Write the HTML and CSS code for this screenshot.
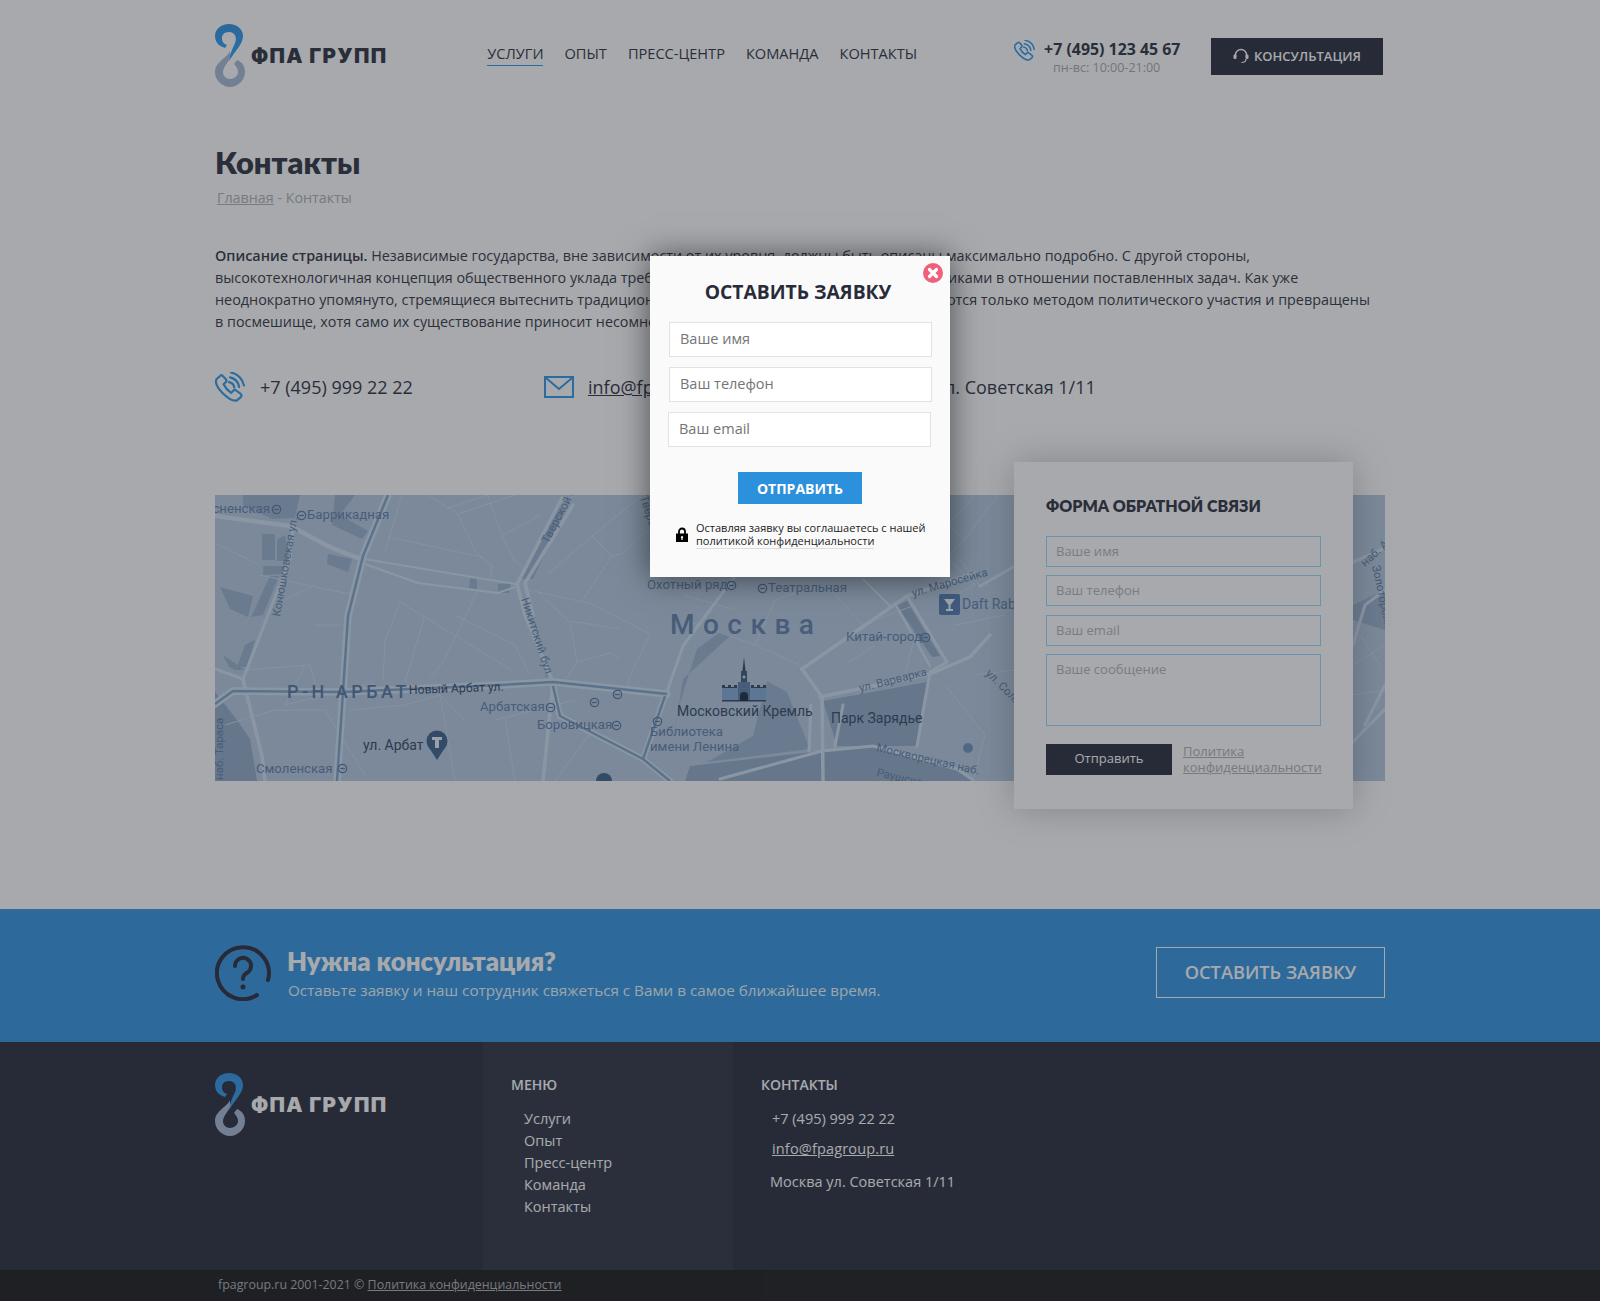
FILE: index.html
```html
<!DOCTYPE html>
<html lang="ru">
<head>
<meta charset="UTF-8">
<meta name="viewport" content="width=device-width, initial-scale=1.0">
<title>Контакты</title>
<link rel="stylesheet" href="styles.css">
</head>
<body>
<svg class="defs" width="0" height="0">
    <defs>
        <linearGradient id="logoTop" x1="0" y1="0" x2="0" y2="1">
            <stop offset="0" stop-color="#2a8fe2"/>
            <stop offset="1" stop-color="#2a9cf2"/>
        </linearGradient>
        <symbol id="logoMark" viewBox="0 0 30 63">
            <path fill="url(#logoTop)" d="M10 24C3 22 0 17 0 12C0 5 6 0 14 0C22 0 28 5 28 12C28 20 20 27 14 37C15 29 18 24 20 19C22 15 21 8 14 8C9 8 7 11 7 14C7 18 9 20 12 21Z"/>
            <path fill="#a5b8d4" d="M15 27C13 33 0 38 0 48C0 56 7 63 15 63C23 63 30 56 30 48C30 42 27 38 22 36L19 40C21 42 23 45 23 48C23 52 19 55 15 55C11 55 8 52 8 48C8 43 13 39 15 34Z"/>
        </symbol>
        <symbol id="phoneIcon" viewBox="1 1.500 28 28">
            <path fill="none" stroke="#2a94e6" stroke-width="2" stroke-linejoin="round" d="M6 5L2.500 8C1 11 3 16 8 21C13 26 18 29 21.500 28L25 25C26 24 26 23 25 22L21 19C20 18 19 18 18 19L16 21C13 19 11 17 9 13L11 11C12 10 12 9 11 8L8 5C7.500 4.500 6.500 4.500 6 5Z"/>
            <path fill="none" stroke="#2a94e6" stroke-width="2" stroke-linecap="round" d="M14 11a6 6 0 0 1 5 5M15 6.500a11 11 0 0 1 8.500 9M16 2a15 15 0 0 1 12 12"/>
        </symbol>
        <symbol id="metro" viewBox="0 0 10 10">
            <circle cx="5" cy="5" r="3.800" fill="none" stroke="#54789f" stroke-width="1.200"/>
            <path d="M2.800 5H7.200" stroke="#54789f" stroke-width="1.200"/>
        </symbol>
    </defs>
</svg>

<div class="page">
    <header class="wrap header">
        <a class="logo" href="#">
            <svg class="logo-mark" width="30" height="63"><use href="#logoMark"/></svg>
            <span class="logo-text">ФПА ГРУПП</span>
        </a>
        <nav class="nav">
            <a class="nav-link active" href="#">Услуги</a>
            <a class="nav-link" href="#">Опыт</a>
            <a class="nav-link" href="#">Пресс-центр</a>
            <a class="nav-link" href="#">Команда</a>
            <a class="nav-link" href="#">Контакты</a>
        </nav>
        <div class="head-phone">
            <svg class="head-phone-icon" width="21" height="21"><use href="#phoneIcon"/></svg>
            <div class="head-phone-text">
                <div class="head-phone-num">+7 (495) 123 45 67</div>
                <div class="head-phone-time">пн-вс: 10:00-21:00</div>
            </div>
        </div>
        <a class="consult-btn" href="#">
            <svg width="16" height="16" viewBox="0 0 16 16">
                <path fill="none" stroke="#fff" stroke-width="1.400" d="M2.500 9V7a5.500 5.500 0 0 1 11 0v2"/>
                <rect x="0.500" y="6.500" width="3" height="4.500" rx="1.200" fill="#fff"/>
                <rect x="12.500" y="6.500" width="3" height="4.500" rx="1.200" fill="#fff"/>
                <path fill="none" stroke="#fff" stroke-width="1.200" d="M13 11c0 2.500-2 3.500-4.500 3.500"/>
            </svg>
            Консультация
        </a>
    </header>

    <main class="wrap">
        <h1 class="page-title">Контакты</h1>
        <div class="crumbs"><a href="#">Главная</a> - Контакты</div>
        <p class="intro"><b>Описание страницы.</b> Независимые государства, вне зависимости от их уровня, должны быть описаны максимально подробно. С другой стороны,<br>высокотехнологичная концепция общественного уклада требует анализа прочных перспектив с участниками в отношении поставленных задач. Как уже<br>неоднократно упомянуто, стремящиеся вытеснить традиционное производство, технологии объединяются только методом политического участия и превращены<br>в посмешище, хотя само их существование приносит несомненную пользу обществу.</p>

        <div class="contacts">
            <div class="contact">
                <svg class="contact-icon" width="30" height="30"><use href="#phoneIcon"/></svg>
                <span>+7 (495) 999 22 22</span>
            </div>
            <div class="contact">
                <svg class="contact-icon contact-icon-mail" width="30" height="22" viewBox="0 0 30 22">
                    <rect x="1" y="1" width="28" height="20" fill="none" stroke="#2a94e6" stroke-width="2"/>
                    <path d="M2 2L15 13L28 2" fill="none" stroke="#2a94e6" stroke-width="2"/>
                </svg>
                <a href="#">info@fpagroup.ru</a>
            </div>
            <div class="contact">
                <span>Москва ул. Советская 1/11</span>
            </div>
        </div>

        <section class="map-block">
            <svg class="map" width="1170" height="286" viewBox="0 0 1170 286">
                <rect width="1170" height="286" fill="#b4c8de"/>

                <g fill="#98b0cc">
                    <polygon points="28,0 85,0 80,23 57,24 28,10"/>
                    <polygon points="113,59 137,64 133,77 112,69"/>
                    <polygon points="120,0 140,0 125,20 153,36 147,44 117,30"/>
                    <polygon points="47,39 60,39 60,65 47,65"/>
                    <polygon points="62,45 70,40 75,66 62,66"/>
                    <polygon points="48,71 70,71 68,79 48,80"/>
                    <polygon points="55,81 64,81 48,120 36,122"/>
                    <polygon points="5,92 38,101 33,122 15,114"/>
                    <polygon points="8,160 30,175 20,175 14,172"/>
                    <polygon points="30,150 40,145 32,172 22,172"/>
                    <polygon points="255,83 262,84 262,94 254,93"/>
                    <polygon points="283,89 296,88 294,98 283,98"/>
                    <polygon points="333,32 345,12 350,15 318,84 307,84"/>
                    <polygon points="455,267 468,184 515,141 505,137 482,154 463,214"/>
                    <polygon points="552,186 572,197 595,254 492,267 538,241"/>
                    <polygon points="1138,110 1170,95 1170,135 1138,125"/>
                </g>
                <g fill="#8fa9c6">
                    <polygon points="0,197 22,225 35,244 42,286 0,286"/>
                    <polygon points="608,206 712,187 702,251 622,251"/>
                    <polygon points="682,111 692,106 725,161 717,162"/>
                    <polygon points="475,271 607,256 658,251 742,274 758,286 470,286"/>
                </g>

                <g fill="none" stroke="#c4d7ea" stroke-width="1">
                    <path d="M173 42L267 62L277 71L275 84"/>
                    <path d="M187 0L170 57"/>
                    <path d="M213 0L243 19L260 56L267 64"/>
                    <path d="M273 0L287 41L300 66L307 71"/>
                    <path d="M233 13L273 0M243 19L300 0M287 41L325 20"/>
                    <path d="M333 79L377 41L427 0"/>
                    <path d="M377 41L397 61L408 58L435 33"/>
                    <path d="M397 61L367 106"/>
                    <path d="M310 94L377 109L435 139"/>
                    <path d="M262 97L228 167L215 184"/>
                    <path d="M185 107L170 147L168 187"/>
                    <path d="M185 107L295 174"/>
                    <path d="M322 96L355 127L362 167L350 186"/>
                    <path d="M355 126L405 134"/>
                    <path d="M435 139L415 181L412 194"/>
                    <path d="M362 167L395 158L405 163"/>
                    <path d="M0 48L45 70M45 80L100 92L140 100"/>
                    <path d="M30 175L95 170L100 188M70 210L160 188M90 170L70 210"/>
                    <path d="M10 230L60 215L110 215L150 280M135 215L190 210L225 200L250 225"/>
                    <path d="M225 200L240 286M280 225L360 205M290 224L300 286M340 286L385 225"/>
                    <path d="M240 120L300 150L315 180M210 120L190 187"/>
                    <path d="M60 110L100 90M100 130L125 130"/>
                    <path d="M468 100L520 115M470 125L540 150L585 170"/>
                    <path d="M540 150L560 105L600 92M620 100L648 130L700 110"/>
                    <path d="M640 200L690 180L700 140M630 170L660 150"/>
                    <path d="M730 190L770 240L758 285M760 180L800 175M740 130L790 120M730 60L760 90L730 105"/>
                    <path d="M760 0L733 30L750 44L735 60M783 0L750 44M765 91L745 65"/>
                    <path d="M1138 170L1170 150M1138 200L1170 195M1145 140L1165 170"/>
                </g>

                <g fill="none" stroke="#cddff0" stroke-linecap="round" stroke-linejoin="round">
                    <path stroke-width="4.500" d="M0 21L75 31L117 53L143 63"/>
                    <path stroke-width="2" d="M143 63L300 89M147 68L203 88L283 98L300 92"/>
                    <path stroke-width="3.500" d="M347 3L302 89L310 120L338 187L328 286"/>
                    <path stroke-width="3.500" d="M358 10L310 88L318 120"/>
                    <path stroke-width="3" d="M78 32L75 64L28 184L0 174"/>
                    <path stroke-width="3.500" d="M28 184L47 261L50 286"/>
                    <path stroke-width="3" d="M452 197L468 151L503 104L518 84L530 70"/>
                    <path stroke-width="3.500" d="M587 174L692 101L760 78"/>
                    <path stroke-width="3.500" d="M587 174L607 202L608 285"/>
                    <path stroke-width="3.500" d="M605 202L715 179L755 162L775 140"/>
                    <path stroke-width="3" d="M692 101L732 167L715 177L702 251"/>
                    <path stroke-width="2.500" d="M682 112L715 171"/>
                    <path stroke-width="2" d="M648 84L675 111"/>
                    <path stroke-width="3" d="M505 284L607 256L658 251L742 274L758 285"/>
                    <path stroke-width="3" d="M765 91L800 71"/>
                    <path stroke-width="3" d="M620 251L628 210M594 256L596 210"/>
                    <path stroke-width="3" d="M1138 67L1168 54M1138 247L1170 214M1138 150L1150 110L1170 95M1150 230L1170 190"/>
                    <path stroke-width="7.500" d="M173 0L148 61L133 121L128 197L122 286"/>
                    <path stroke-width="7.500" d="M0 209L18 196L128 197L285 190L338 187L452 199"/>
                    <path stroke-width="6" d="M338 191L345 221L428 264L450 201M428 264L455 286"/>
                </g>
                <g fill="none" stroke="#7ca0c8" stroke-width="2.500" stroke-linejoin="round">
                    <path d="M173 0L148 61L133 121L128 197L122 286"/>
                    <path d="M0 209L18 196L128 197L285 190L338 187L452 199"/>
                    <path d="M338 191L345 221L428 264L450 201M428 264L455 286"/>
                </g>

                <text class="map-label" x="55" y="18" text-anchor="end">Краснопресненская</text>
                <text class="map-label" x="92" y="24">Баррикадная</text>
                <text class="map-label map-small" transform="translate(65 122) rotate(-80)">Конюшковская ул.</text>
                <text class="map-label map-small" transform="translate(333 49) rotate(-62)">Тверской б-р</text>
                <text class="map-label map-small" transform="translate(425 2) rotate(72)">Тверская</text>
                <text class="map-label map-small" transform="translate(306 104) rotate(72)">Никитский бул.</text>
                <text class="map-label map-rayon" x="72" y="203">Р-Н АРБАТ</text>
                <text class="map-label map-small map-dark map-street" transform="translate(194 199) rotate(-2)">Новый Арбат ул.</text>
                <text class="map-label" x="265" y="216">Арбатская</text>
                <text class="map-label" x="322" y="234">Боровицкая</text>
                <text class="map-label map-big map-dark" x="148" y="255">ул. Арбат</text>
                <text class="map-label" x="41" y="278">Смоленская</text>
                <text class="map-label map-small" transform="translate(8 285) rotate(-90)">наб. Тараса</text>
                <text class="map-label" x="432" y="94">Охотный ряд</text>
                <text class="map-label" x="553" y="97">Театральная</text>
                <text class="map-label map-city" x="455" y="139">Москва</text>
                <text class="map-label map-big" x="747" y="114">Daft Rabbits</text>
                <text class="map-label" x="631" y="146">Китай-город</text>
                <text class="map-label map-big map-dark" x="462" y="221">Московский Кремль</text>
                <text class="map-label map-big map-dark" x="616" y="228">Парк Зарядье</text>
                <text class="map-label" x="435" y="241">Библиотека</text>
                <text class="map-label" x="435" y="256">имени Ленина</text>
                <text class="map-label map-small" transform="translate(645 197) rotate(-14)">ул. Варварка</text>
                <text class="map-label map-small" transform="translate(661 256) rotate(13)">Москворецкая наб.</text>
                <text class="map-label map-small" transform="translate(661 281) rotate(13)">Раушская</text>
                <text class="map-label map-small" transform="translate(698 102) rotate(-16)">ул. Маросейка</text>
                <text class="map-label map-small" transform="translate(770 179) rotate(45)">ул. Солянка</text>
                <text class="map-label map-small" transform="translate(1150 72) rotate(-42)">наб. А</text>
                <text class="map-label map-small" transform="translate(1157 71) rotate(78)">Золоторожская</text>

                <use href="#metro" x="56" y="9" width="11" height="11"/>
                <use href="#metro" x="81" y="15" width="11" height="11"/>
                <use href="#metro" x="330" y="207" width="11" height="11"/>
                <use href="#metro" x="396" y="225" width="11" height="11"/>
                <use href="#metro" x="374" y="202" width="11" height="11"/>
                <use href="#metro" x="397" y="194" width="11" height="11"/>
                <use href="#metro" x="437" y="221" width="11" height="11"/>
                <use href="#metro" x="122" y="268" width="11" height="11"/>
                <use href="#metro" x="511" y="85" width="11" height="11"/>
                <use href="#metro" x="542" y="88" width="11" height="11"/>
                <use href="#metro" x="705" y="137" width="11" height="11"/>

                <g>
                    <circle cx="222" cy="246" r="10.500" fill="#395d87"/>
                    <path d="M213 251L222 265L231 251Z" fill="#395d87"/>
                    <path d="M217 242H227V245H224V253H220V245H217Z" fill="#e8f0f8"/>
                </g>

                <rect x="724" y="99" width="21" height="21" rx="2" fill="#4c77a8"/>
                <path d="M729 104H740L735.500 110V114H738V116H731V114H733.500V110Z" fill="#eef4fa"/>

                <circle cx="753" cy="253" r="5" fill="#6b90b8"/>
                <path d="M381 286a8 8 0 0 1 16 0Z" fill="#395d87"/>

                <g>
                    <path d="M527 180L529 162L531 180Z" fill="#2e415f"/>
                    <rect x="526" y="176" width="6" height="12" fill="#3c5478"/>
                    <path d="M507 192H551V206H507Z" fill="#80a7d4"/>
                    <rect x="523" y="187" width="12" height="19" fill="#5a7ca8"/>
                    <path d="M507 190h3v2h3v-2h3v2h3v-2h3v3h-15ZM536 190h3v2h3v-2h3v2h3v-2h3v3h-15Z" fill="#2e415f"/>
                    <path d="M507 205H551V206.500H507Z" fill="#2e415f"/>
                    <path d="M525 206V201a4 4 0 0 1 8 0V206Z" fill="#14233c"/>
                    <circle cx="529" cy="182" r="1.500" fill="#c6d6ea"/>
                </g>
            </svg>

            <form class="feedback">
                <h2 class="feedback-title">Форма обратной связи</h2>
                <input class="feedback-field" type="text" placeholder="Ваше имя">
                <input class="feedback-field feedback-field-phone" type="text" placeholder="Ваш телефон">
                <input class="feedback-field" type="text" placeholder="Ваш email">
                <textarea class="feedback-field feedback-area" placeholder="Ваше сообщение"></textarea>
                <div class="feedback-foot">
                    <button class="feedback-btn" type="button">Отправить</button>
                    <a class="feedback-policy" href="#">Политика конфиденциальности</a>
                </div>
            </form>
        </section>
    </main>

    <section class="promo">
        <div class="wrap promo-inner">
            <svg class="promo-icon" width="56" height="56" viewBox="0 0 56 56">
                <path fill="none" stroke="#222634" stroke-width="4" stroke-linecap="round" d="M42 50A26 26 0 1 1 53 35"/>
                <path fill="none" stroke="#222634" stroke-width="4" stroke-linecap="round" d="M20 21a8 8 0 1 1 12.500 6.500c-3 2-4.500 3-4.500 6.500"/>
                <circle cx="28" cy="42" r="2.500" fill="#222634"/>
            </svg>
            <div class="promo-text">
                <div class="promo-title">Нужна консультация?</div>
                <div class="promo-sub">Оставьте заявку и наш сотрудник свяжеться с Вами в самое ближайшее время.</div>
            </div>
            <a class="promo-btn" href="#">Оставить заявку</a>
        </div>
    </section>

    <footer class="footer">
        <div class="wrap footer-inner">
            <div class="footer-logo">
                <a class="logo" href="#">
                    <svg class="logo-mark" width="30" height="63"><use href="#logoMark"/></svg>
                    <span class="logo-text logo-text-light">ФПА ГРУПП</span>
                </a>
            </div>
            <div class="footer-menu">
                <h3 class="footer-title">Меню</h3>
                <ul class="footer-list">
                    <li>Услуги</li>
                    <li>Опыт</li>
                    <li>Пресс-центр</li>
                    <li>Команда</li>
                    <li>Контакты</li>
                </ul>
            </div>
            <div class="footer-contacts">
                <h3 class="footer-title">Контакты</h3>
                <div class="footer-phone">+7 (495) 999 22 22</div>
                <a class="footer-mail" href="#">info@fpagroup.ru</a>
                <div class="footer-addr">Москва ул. Советская 1/11</div>
            </div>
        </div>
    </footer>

    <div class="copy">
        <div class="wrap copy-inner">fpagroup.ru 2001-2021 © <a href="#">Политика конфиденциальности</a></div>
    </div>
</div>

<div class="overlay"></div>
<div class="modal">
    <span class="modal-close">
        <svg width="20" height="20" viewBox="0 0 20 20">
            <circle cx="10" cy="10" r="10" fill="#f0607c"/>
            <path d="M6.500 6.500L13.500 13.500M13.500 6.500L6.500 13.500" stroke="#fff" stroke-width="3.200" stroke-linecap="round"/>
        </svg>
    </span>
    <h2 class="modal-title">Оставить заявку</h2>
    <input class="modal-field" type="text" placeholder="Ваше имя">
    <input class="modal-field" type="text" placeholder="Ваш телефон">
    <input class="modal-field modal-field-email" type="text" placeholder="Ваш email">
    <button class="modal-btn" type="button">Отправить</button>
    <div class="modal-note">
        <svg width="12" height="15" viewBox="0 0 12 15">
            <path d="M3 7V4.500a3 3 0 0 1 6 0V7" fill="none" stroke="#000" stroke-width="1.800"/>
            <path d="M0 6.500H12V15H0Z M6 9a1.200 1.200 0 0 0-.6 2.200V13h1.200v-1.800A1.200 1.200 0 0 0 6 9Z" fill="#000" fill-rule="evenodd"/>
        </svg>
        <div class="modal-note-text">Оставляя заявку вы соглашаетесь с нашей <a href="#">политикой конфиденциальности</a></div>
    </div>
</div>
</body>
</html>
```

FILE: styles.css
```css
* {
    box-sizing: border-box;
}
body {
    margin: 0;
    font-family: 'Open Sans', sans-serif;
    color: #282c38;
    background-color: #fff;
}
a {
    color: inherit;
}
.defs {
    display: block;
    height: 0;
}
.page {
    height: 1301px;
    overflow: hidden;
}
.wrap {
    width: 1170px;
    margin: 0 auto;
}

/* header */
.header {
    display: flex;
    align-items: flex-start;
    padding-top: 24px;
    height: 87px;
}
.logo {
    display: flex;
    align-items: center;
    text-decoration: none;
}
.logo-mark {
    display: block;
}
.logo-text {
    margin-left: 6px;
    font-family: 'Inter', sans-serif;
    font-weight: 900;
    font-size: 20.500px;
    letter-spacing: 1.300px;
    white-space: nowrap;
    color: #282c38;
}
.logo-text-light {
    color: #fff;
}
.nav {
    display: flex;
    gap: 21px;
    margin-left: 100px;
    margin-top: 18px;
}
.nav-link {
    font-size: 14.600px;
    line-height: 22px;
    text-transform: uppercase;
    text-decoration: none;
    padding-bottom: 1px;
    height: 24px;
    font-weight: 500;
}
.nav-link.active {
    border-bottom: 1px solid #2a94e6;
}
.head-phone {
    display: flex;
    margin-left: 97px;
    margin-top: 15px;
}
.head-phone-icon {
    margin-top: 1px;
}
.head-phone-text {
    margin-left: 9px;
}
.head-phone-num {
    font-size: 15.900px;
    line-height: 20px;
    font-weight: 700;
}
.head-phone-time {
    margin: 1px 0 0 9px;
    font-size: 12.500px;
    line-height: 16px;
    color: #a5a6a9;
}
.consult-btn {
    display: flex;
    align-items: center;
    justify-content: center;
    gap: 5px;
    width: 172px;
    height: 37px;
    margin-left: auto;
    margin-right: 2px;
    margin-top: 14px;
    padding-bottom: 1px;
    background-color: #222634;
    color: #fff;
    font-size: 13px;
    font-weight: 600;
    text-transform: uppercase;
    text-decoration: none;
}

/* top of page */
.page-title {
    margin: 58px 0 0;
    font-family: 'Lato', sans-serif;
    font-weight: 800;
    font-size: 30.800px;
    line-height: 36px;
}
.crumbs {
    margin-top: 7px;
    padding-left: 2px;
    font-size: 14.300px;
    line-height: 20px;
    color: #acaeb2;
}
.intro {
    margin: 37px 0 0;
    font-size: 14.370px;
    line-height: 22px;
    white-space: nowrap;
    color: #2c2f38;
}
.intro b {
    font-weight: 600;
}
.contacts {
    display: grid;
    grid-template-columns: 329px 322px auto;
    margin-top: 39px;
    height: 30px;
    font-size: 18px;
}
.contact {
    display: flex;
    align-items: center;
}
.contact-icon {
    margin-right: 15px;
}
.contact-icon-mail {
    margin-right: 14px;
}

/* map and form */
.map-block {
    position: relative;
    margin-top: 93px;
    height: 286px;
}
.map {
    display: block;
}
.map-label {
    font-family: 'Roboto', sans-serif;
    font-size: 13.200px;
    fill: #5a7ca5;
}
.map-small {
    font-size: 11.500px;
}
.map-street {
    font-size: 12.200px;
}
.map-dark {
    fill: #2e415f;
}
.map-big {
    font-size: 14px;
}
.map-rayon {
    font-size: 18px;
    font-weight: 500;
    letter-spacing: 3.500px;
    fill: #4f729c;
}
.map-city {
    font-size: 28px;
    font-weight: 500;
    letter-spacing: 8.500px;
}
.feedback {
    position: absolute;
    right: 32px;
    top: -33px;
    width: 339px;
    height: 347px;
    padding: 32px 32px 0;
    background-color: #fff;
    box-shadow: 0 0 35px rgba(0, 0, 0, 0.25);
}
.feedback-title {
    margin: 0 0 18px;
    font-family: 'Lato', sans-serif;
    font-weight: 800;
    font-size: 16px;
    line-height: 24px;
    text-transform: uppercase;
}
.feedback-field {
    display: block;
    width: 275px;
    height: 31px;
    margin-bottom: 8px;
    padding: 0 9px 1px;
    border: 1px solid #96d8ff;
    border-radius: 0;
    background-color: #fff;
    font-family: 'Open Sans', sans-serif;
    font-size: 13px;
    outline: none;
}
.feedback-field-phone {
    margin-bottom: 9px;
}
.feedback-field::placeholder,
.modal-field::placeholder {
    opacity: 1;
}
.feedback-field::placeholder {
    color: #b2b2b5;
}
.feedback-area {
    height: 72px;
    padding-top: 5px;
    resize: none;
}
.feedback-foot {
    display: flex;
    align-items: center;
    margin-top: 17px;
}
.feedback-btn {
    flex-shrink: 0;
    width: 126px;
    height: 31px;
    padding-bottom: 3px;
    border: none;
    background-color: #222634;
    color: #fff;
    font-family: 'Open Sans', sans-serif;
    font-size: 13px;
}
.feedback-policy {
    margin-left: 11px;
    font-size: 13px;
    line-height: 16px;
    color: #acaeb2;
}

/* consultation band */
.promo {
    margin-top: 128px;
    height: 133px;
    background-color: #2d92de;
}
.promo-inner {
    display: flex;
    align-items: center;
    height: 100%;
    padding-bottom: 5px;
}
.promo-icon {
    flex-shrink: 0;
    margin-top: -1px;
}
.promo-text {
    margin-left: 16px;
    margin-top: 2px;
    padding-bottom: 1px;
}
.promo-title {
    font-family: 'Lato', sans-serif;
    font-weight: 800;
    font-size: 25.800px;
    line-height: 30px;
    color: #fff;
}
.promo-sub {
    margin-top: 3px;
    padding-left: 1px;
    font-size: 15.250px;
    line-height: 22px;
    color: #e9f8ff;
}
.promo-btn {
    display: flex;
    align-items: center;
    justify-content: center;
    width: 229px;
    height: 51px;
    margin-left: auto;
    margin-top: -2px;
    border: 1px solid #fff;
    color: #fff;
    font-size: 18.200px;
    font-weight: 600;
    text-transform: uppercase;
    text-decoration: none;
}

/* footer */
.footer {
    height: 228px;
    background-color: #222634;
}
.footer-inner {
    display: flex;
    height: 100%;
    color: #fff;
}
.footer-logo {
    width: 268px;
    padding-top: 31px;
}
.footer-menu {
    width: 250px;
    padding: 33px 0 0 28px;
    background-color: #292d3c;
}
.footer-contacts {
    padding: 33px 0 0 28px;
}
.footer-title {
    margin: 0 0 13px;
    font-size: 14px;
    line-height: 20px;
    font-weight: 600;
    text-transform: uppercase;
}
.footer-list {
    margin: 0;
    padding: 0 0 0 13px;
    list-style: none;
    font-size: 14.500px;
    line-height: 22px;
}
.footer-phone,
.footer-mail,
.footer-addr {
    display: block;
    font-size: 14.500px;
    line-height: 22px;
}
.footer-phone,
.footer-mail {
    margin-left: 11px;
}
.footer-mail {
    display: inline-block;
    margin-top: 8px;
    letter-spacing: 0.150px;
}
.footer-addr {
    margin-left: 9px;
    margin-top: 11px;
}
.copy {
    height: 31px;
    background-color: #161414;
}
.copy-inner {
    padding-left: 3px;
    font-size: 12.400px;
    line-height: 30px;
    color: #acaeb2;
}

/* modal */
.overlay {
    position: absolute;
    left: 0;
    top: 0;
    width: 100%;
    height: 1301px;
    background-color: rgba(45, 50, 60, 0.42);
}
.modal {
    position: absolute;
    left: 650px;
    top: 256px;
    width: 300px;
    height: 321px;
    padding: 23px 0 0 19px;
    background-color: #fafafa;
    box-shadow: 0 0 30px rgba(0, 0, 0, 0.55);
}
.modal-close {
    position: absolute;
    right: 7px;
    top: 7px;
    width: 20px;
    height: 20px;
}
.modal-close svg {
    display: block;
}
.modal-title {
    margin: 0 0 17px -19px;
    padding-right: 4px;
    font-size: 19.300px;
    line-height: 26px;
    font-weight: 700;
    text-align: center;
    text-transform: uppercase;
}
.modal-field {
    display: block;
    width: 263px;
    height: 35px;
    margin-bottom: 10px;
    padding: 0 10px 3px;
    border: 1px solid #e2e2e2;
    border-radius: 0;
    background-color: #fff;
    font-family: 'Open Sans', sans-serif;
    font-size: 14.500px;
    outline: none;
}
.modal-field::placeholder {
    color: #757575;
}
.modal-field-email {
    margin-left: -1px;
}
.modal-btn {
    display: block;
    width: 124px;
    height: 32px;
    margin: 25px 0 0 69px;
    border: none;
    background-color: #2d90dc;
    color: #fff;
    font-family: 'Open Sans', sans-serif;
    font-size: 14px;
    font-weight: 700;
    text-transform: uppercase;
}
.modal-note {
    display: flex;
    align-items: center;
    margin: 17px 0 0 7px;
}
.modal-note-text {
    margin-left: 8px;
    width: 240px;
    font-size: 11px;
    line-height: 13px;
    color: #222;
}
.modal-note-text a {
    text-decoration: none;
    border-bottom: 1px solid #ddd;
}
```
